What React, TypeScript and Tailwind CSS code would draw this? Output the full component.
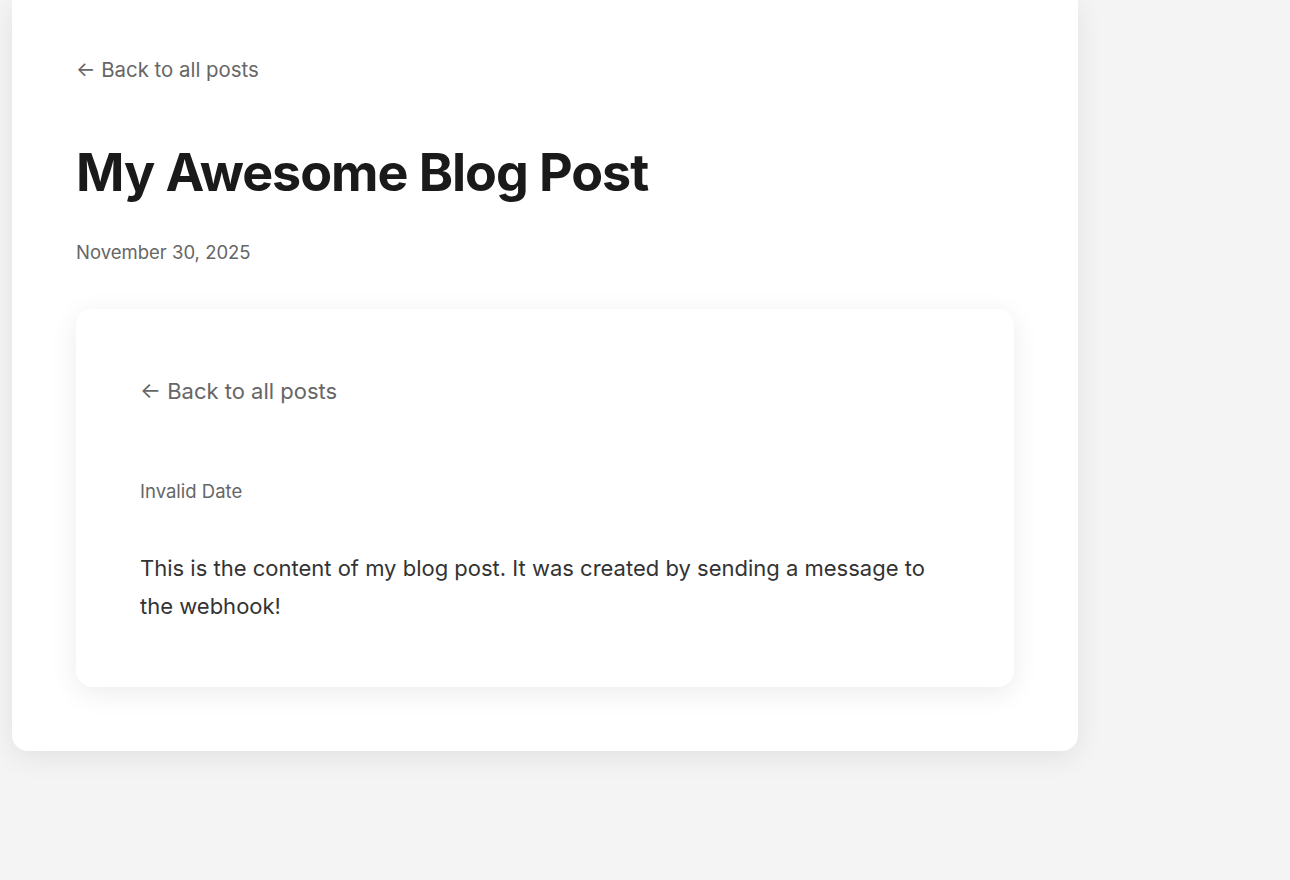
export default function App() {
  return (
    <div className="min-h-[880px] bg-[#f4f4f4] font-['Inter',sans-serif]">
      <div className="ml-3 w-[1066px] rounded-b-2xl bg-white px-16 pt-[56px] pb-16 shadow-[0_6px_28px_rgba(0,0,0,0.08)]">
        <a href="#" className="block text-[20.4px] leading-7 text-[#666]">
          ← Back to all posts
        </a>
        <h1 className="mt-[57px] text-[52px] leading-[64px] font-bold tracking-[-0.02em] text-[#1a1a1a]">
          My Awesome Blog Post
        </h1>
        <div className="mt-[33px] text-[18.5px] leading-7 text-[#666]">November 30, 2025</div>
        <div className="mt-[43px] rounded-2xl bg-white px-16 pt-16 pb-[62px] shadow-[0_6px_28px_rgba(0,0,0,0.08)]">
          <a href="#" className="block text-[22px] leading-9 text-[#666]">
            ← Back to all posts
          </a>
          <div className="mt-[68px] text-[18.5px] leading-7 text-[#666]">Invalid Date</div>
          <p className="mt-[44px] text-[22px] leading-[38px] text-[#333]">
            This is the content of my blog post. It was created by sending a message to the webhook!
          </p>
        </div>
      </div>
    </div>
  )
}
